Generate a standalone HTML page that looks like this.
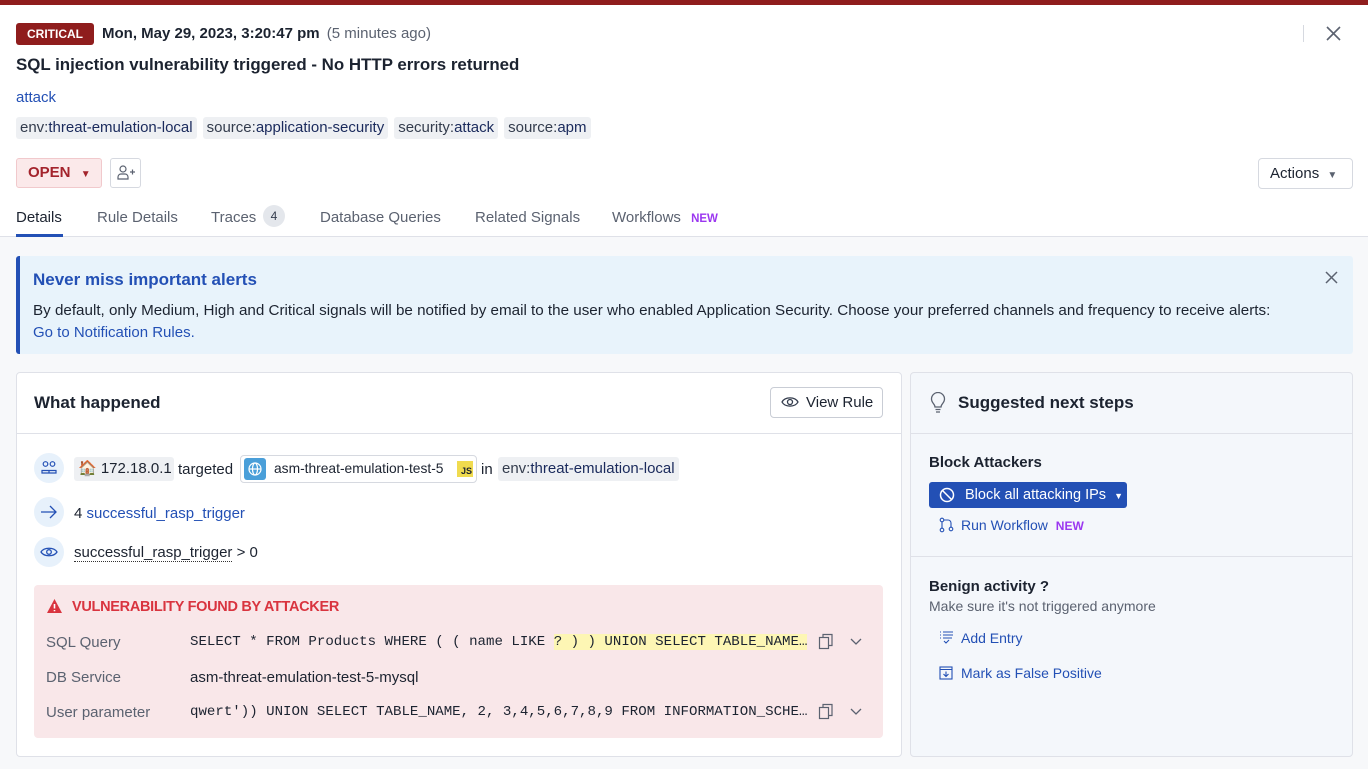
<!DOCTYPE html>
<html><head><meta charset="utf-8">
<style>
*{box-sizing:border-box;margin:0;padding:0}
body{width:1368px;height:769px;overflow:hidden;font-family:"Liberation Sans",sans-serif;color:#1c2330;background:#f7f8fa;position:relative;font-size:15px}
.a{position:absolute;white-space:nowrap}
.top{position:absolute;left:0;top:0;width:1368px;height:237px;background:#fff;border-bottom:1px solid #dfe1e8}
.bar{position:absolute;left:0;top:0;width:1368px;height:5px;background:#8f1d1d}
.tag{display:inline-block;background:#eef0f3;border-radius:3px;padding:0 4px;height:22px;line-height:22px;color:#333c4d;font-size:15px;margin-right:6px}
.tag b{font-weight:normal;color:#1a2a5c}
.link{color:#2350b5}
.tab{color:#5b6270;font-size:15px}
.card{position:absolute;background:#fff;border:1px solid #dfe1e8;border-radius:4px}
.ic{position:absolute;width:30px;height:30px;border-radius:50%;background:#e7f1fb}
.mono{font-family:"Liberation Mono",monospace;font-size:14.1px;color:#1c2330}
.lbl{color:#5b6270;font-size:15px}
</style></head><body>
<div class="top"></div>
<div class="bar"></div>
<div class="a" style="left:16px;top:23px;width:78px;height:22px;background:#8f1d1d;border-radius:3px;color:#fff;font-size:12px;font-weight:bold;text-align:center;line-height:22px">CRITICAL</div>
<div class="a" style="left:102px;top:25px;font-size:15px;font-weight:bold">Mon, May 29, 2023, 3:20:47 pm <span style="font-weight:normal;color:#5b6270;font-size:15px;margin-left:3px">(5 minutes ago)</span></div>
<div class="a" style="left:1303px;top:25px;width:1px;height:17px;background:#d6d9e0"></div>
<svg class="a" style="left:1325px;top:25px" width="17" height="17" viewBox="0 0 17 17"><path d="M2 2L15 15M15 2L2 15" stroke="#5b6270" stroke-width="1.6"/></svg>
<div class="a" style="left:16px;top:55px;font-size:16.9px;font-weight:bold">SQL injection vulnerability triggered - No HTTP errors returned</div>
<div class="a link" style="left:16px;top:89px;font-size:15px">attack</div>
<div class="a" style="left:16px;top:117px"><span class="tag">env:<b>threat-emulation-local</b></span><span class="tag">source:<b>application-security</b></span><span class="tag">security:<b>attack</b></span><span class="tag">source:<b>apm</b></span></div>
<div class="a" style="left:16px;top:158px;width:86px;height:30px;background:#fbe9ea;border:1px solid #f1c9cc;border-radius:3px;color:#a3232c;font-weight:bold;font-size:15px;line-height:28px;padding-left:11px">OPEN <span style="font-size:10px;margin-left:6px">▼</span></div>
<div class="a" style="left:110px;top:158px;width:31px;height:30px;border:1px solid #d6d9e0;border-radius:3px"><svg width="29" height="28" viewBox="0 0 29 28"><circle cx="12" cy="10" r="3" fill="none" stroke="#5b6270" stroke-width="1.2"/><path d="M7 20v-2a3 3 0 0 1 3-3h4a3 3 0 0 1 3 3v2z" fill="none" stroke="#5b6270" stroke-width="1.2"/><path d="M19 13h5M21.5 10.5v5" stroke="#5b6270" stroke-width="1.2"/></svg></div>
<div class="a" style="left:1258px;top:158px;width:95px;height:31px;border:1px solid #d6d9e0;border-radius:4px;font-size:15px;line-height:29px;padding-left:11px">Actions <span style="font-size:10px;color:#5b6270;margin-left:4px">▼</span></div>
<div class="a" style="left:16px;top:209px;font-size:15px;color:#1c2330">Details</div>
<div class="a" style="left:16px;top:234px;width:47px;height:3px;background:#2350b5"></div>
<div class="a tab" style="left:97px;top:209px">Rule Details</div>
<div class="a tab" style="left:211px;top:209px">Traces</div>
<div class="a" style="left:263px;top:205px;width:22px;height:22px;border-radius:11px;background:#e4e7ec;color:#333c4d;font-size:12px;text-align:center;line-height:22px">4</div>
<div class="a tab" style="left:320px;top:209px">Database Queries</div>
<div class="a tab" style="left:475px;top:209px">Related Signals</div>
<div class="a tab" style="left:612px;top:209px">Workflows <span style="color:#9b37f0;font-size:11.5px;font-weight:bold;margin-left:6px">NEW</span></div>

<div class="a" style="left:16px;top:256px;width:1337px;height:98px;background:#e8f3fb;border-left:4px solid #2350b5;border-radius:3px"></div>
<div class="a" style="left:33px;top:270px;font-size:17px;font-weight:bold;color:#2350b5">Never miss important alerts</div>
<div class="a" style="left:33px;top:302px;font-size:15.2px;color:#1c2330">By default, only Medium, High and Critical signals will be notified by email to the user who enabled Application Security. Choose your preferred channels and frequency to receive alerts:</div>
<div class="a link" style="left:33px;top:324px;font-size:15px">Go to Notification Rules.</div>
<svg class="a" style="left:1325px;top:271px" width="13" height="13" viewBox="0 0 13 13"><path d="M1 1L12 12M12 1L1 12" stroke="#5b6270" stroke-width="1.5"/></svg>

<div class="card" style="left:16px;top:372px;width:886px;height:385px"></div>
<div class="a" style="left:17px;top:433px;width:884px;height:1px;background:#dfe1e8"></div>
<div class="a" style="left:34px;top:393px;font-size:17px;font-weight:bold">What happened</div>
<div class="a" style="left:770px;top:387px;width:113px;height:31px;border:1px solid #c9cdd5;border-radius:4px;font-size:15px;line-height:29px;padding-left:35px">View Rule</div>
<svg class="a" style="left:781px;top:395px" width="18" height="14" viewBox="0 0 18 14"><path d="M1 7C4 1.5 14 1.5 17 7C14 12.5 4 12.5 1 7Z" fill="none" stroke="#333c4d" stroke-width="1.3"/><circle cx="9" cy="7" r="2.5" fill="none" stroke="#333c4d" stroke-width="1.3"/></svg>

<div class="ic" style="left:34px;top:453px"><svg width="30" height="30" viewBox="0 0 30 30"><circle cx="11.5" cy="11" r="2.3" fill="none" stroke="#2350b5" stroke-width="1.2"/><circle cx="18.5" cy="11" r="2.3" fill="none" stroke="#2350b5" stroke-width="1.2"/><path d="M8 20v-2.5h7V20zM15 20v-2.5h7V20z" fill="none" stroke="#2350b5" stroke-width="1.2"/></svg></div>
<div class="a" style="left:74px;top:457px;height:24px;width:100px;background:#eef0f3;border-radius:3px;padding:0 4px;line-height:24px;font-size:15px">🏠 172.18.0.1</div>
<div class="a" style="left:178px;top:461px;font-size:15px">targeted</div>
<div class="a" style="left:240px;top:455px;width:237px;height:28px;border:1px solid #d6d9e0;border-radius:4px"></div>
<div class="a" style="left:244px;top:458px;width:22px;height:22px;background:#4a9fd9;border-radius:3px"><svg width="22" height="22" viewBox="0 0 22 22"><circle cx="11" cy="11" r="6" fill="none" stroke="#fff" stroke-width="1.2"/><ellipse cx="11" cy="11" rx="2.5" ry="6" fill="none" stroke="#fff" stroke-width="1.2"/><path d="M5 11h12" stroke="#fff" stroke-width="1.2"/></svg></div>
<div class="a" style="left:274px;top:461px;font-size:13.8px">asm-threat-emulation-test-5</div>
<div class="a" style="left:457px;top:461px;width:16px;height:16px;background:#f0db4f;font-size:9px;font-weight:bold;line-height:20px;text-align:right;padding-right:1px">JS</div>
<div class="a" style="left:481px;top:461px;font-size:15px">in</div>
<div class="a" style="left:498px;top:457px"><span class="tag" style="height:24px;line-height:24px">env:<b>threat-emulation-local</b></span></div>

<div class="ic" style="left:34px;top:497px"><svg width="30" height="30" viewBox="0 0 30 30"><path d="M7 15h15M16 9l6 6-6 6" fill="none" stroke="#2350b5" stroke-width="1.3"/></svg></div>
<div class="a" style="left:74px;top:505px;font-size:15px">4 <span class="link">successful_rasp_trigger</span></div>
<div class="ic" style="left:34px;top:537px"><svg width="30" height="30" viewBox="0 0 30 30"><path d="M7 15C10 10 20 10 23 15C20 20 10 20 7 15Z" fill="none" stroke="#2350b5" stroke-width="1.3"/><circle cx="15" cy="15" r="2.3" fill="none" stroke="#2350b5" stroke-width="1.3"/></svg></div>
<div class="a" style="left:74px;top:544px;font-size:15px"><span style="border-bottom:1px dotted #333">successful_rasp_trigger</span> &gt; 0</div>

<div class="a" style="left:34px;top:585px;width:849px;height:153px;background:#f9e7e9;border-radius:4px"></div>
<svg class="a" style="left:46px;top:598px" width="17" height="16" viewBox="0 0 17 16"><path d="M8.5 1L16 15H1Z" fill="#d9343f"/><path d="M8.5 6v4.5M8.5 12v1.2" stroke="#fff" stroke-width="1.6"/></svg>
<div class="a" style="left:72px;top:599px;font-size:14.5px;font-weight:bold;color:#d9343f;letter-spacing:-0.3px">VULNERABILITY FOUND BY ATTACKER</div>
<div class="a lbl" style="left:46px;top:634px">SQL Query</div>
<div class="a mono" style="left:190px;top:634px">SELECT * FROM Products WHERE ( ( name LIKE <span style="background:#fdf6b4">? ) ) UNION SELECT TABLE_NAME…</span></div>
<div class="a lbl" style="left:46px;top:669px">DB Service</div>
<div class="a" style="left:190px;top:669px;font-size:15px">asm-threat-emulation-test-5-mysql</div>
<div class="a lbl" style="left:46px;top:704px">User parameter</div>
<div class="a mono" style="left:190px;top:704px">qwert')) UNION SELECT TABLE_NAME, 2, 3,4,5,6,7,8,9 FROM INFORMATION_SCHE…</div>
<svg class="a" style="left:818px;top:633px" width="16" height="17" viewBox="0 0 16 17"><rect x="1.5" y="4.5" width="9" height="11" fill="none" stroke="#5b6270" stroke-width="1.2"/><path d="M5 4.5V1.5h9v11h-3.5" fill="none" stroke="#5b6270" stroke-width="1.2"/></svg>
<svg class="a" style="left:818px;top:703px" width="16" height="17" viewBox="0 0 16 17"><rect x="1.5" y="4.5" width="9" height="11" fill="none" stroke="#5b6270" stroke-width="1.2"/><path d="M5 4.5V1.5h9v11h-3.5" fill="none" stroke="#5b6270" stroke-width="1.2"/></svg>
<svg class="a" style="left:850px;top:638px" width="12" height="8" viewBox="0 0 12 8"><path d="M1 1l5 5 5-5" fill="none" stroke="#5b6270" stroke-width="1.3"/></svg>
<svg class="a" style="left:850px;top:708px" width="12" height="8" viewBox="0 0 12 8"><path d="M1 1l5 5 5-5" fill="none" stroke="#5b6270" stroke-width="1.3"/></svg>

<div class="card" style="left:910px;top:372px;width:443px;height:385px;background:#f4f7fb"></div>
<div class="a" style="left:911px;top:433px;width:441px;height:1px;background:#dfe1e8"></div>
<div class="a" style="left:911px;top:556px;width:441px;height:1px;background:#dfe1e8"></div>
<svg class="a" style="left:929px;top:392px" width="18" height="22" viewBox="0 0 18 22"><path d="M6 15c0-3-3.5-4-3.5-8a6.5 6.5 0 0 1 13 0c0 4-3.5 5-3.5 8z" fill="none" stroke="#5b6270" stroke-width="1.3"/><path d="M6.5 17.5h5M7 20h4" stroke="#5b6270" stroke-width="1.3"/></svg>
<div class="a" style="left:958px;top:393px;font-size:17px;font-weight:bold">Suggested next steps</div>
<div class="a" style="left:929px;top:454px;font-size:15px;font-weight:bold">Block Attackers</div>
<div class="a" style="left:929px;top:482px;width:198px;height:26px;background:#2350b5;border-radius:3px;color:#fff;font-size:14.5px;line-height:26px;padding-left:36px">Block all attacking IPs <span style="font-size:9px;margin-left:4px">▼</span></div>
<svg class="a" style="left:939px;top:487px" width="16" height="16" viewBox="0 0 16 16"><circle cx="8" cy="8" r="6.5" fill="none" stroke="#fff" stroke-width="1.5"/><path d="M3.5 3.5l9 9" stroke="#fff" stroke-width="1.5"/></svg>
<svg class="a" style="left:939px;top:517px" width="15" height="16" viewBox="0 0 15 16"><circle cx="3" cy="3" r="1.8" fill="none" stroke="#2350b5" stroke-width="1.1"/><circle cx="3" cy="13" r="1.8" fill="none" stroke="#2350b5" stroke-width="1.1"/><circle cx="12" cy="12" r="1.8" fill="none" stroke="#2350b5" stroke-width="1.1"/><path d="M3 5v6M5 3h4a3 3 0 0 1 3 3v4" fill="none" stroke="#2350b5" stroke-width="1.1"/></svg>
<div class="a link" style="left:961px;top:517px;font-size:14px">Run Workflow <span style="color:#9b37f0;font-size:12px;font-weight:bold;margin-left:4px">NEW</span></div>
<div class="a" style="left:929px;top:578px;font-size:15px;font-weight:bold">Benign activity ?</div>
<div class="a" style="left:929px;top:598px;font-size:14px;color:#5b6270">Make sure it's not triggered anymore</div>
<svg class="a" style="left:939px;top:630px" width="15" height="15" viewBox="0 0 15 15"><path d="M1 2h1M4 2h10M1 5h1M4 5h10M1 8h1M4 8h9M5 11l2 2 3-3" fill="none" stroke="#2350b5" stroke-width="1.1"/></svg>
<div class="a link" style="left:961px;top:630px;font-size:14px">Add Entry</div>
<svg class="a" style="left:939px;top:665px" width="14" height="15" viewBox="0 0 14 15"><rect x="1" y="2" width="12" height="12" fill="none" stroke="#2350b5" stroke-width="1.1"/><path d="M1 4.5h12M7 6.5v5M4.5 9l2.5 2.5L9.5 9" fill="none" stroke="#2350b5" stroke-width="1.1"/></svg>
<div class="a link" style="left:961px;top:665px;font-size:14px">Mark as False Positive</div>
</body></html>
